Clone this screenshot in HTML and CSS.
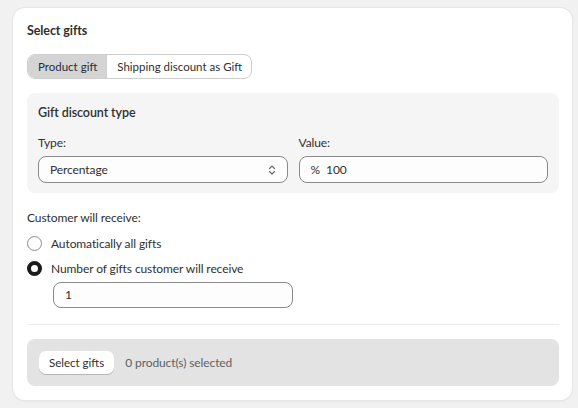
FILE: index.html
```html
<!DOCTYPE html>
<html lang="en">
<head>
    <meta charset="UTF-8">
    <meta name="viewport" content="width=device-width, initial-scale=1.0">
    <title>Select gifts</title>
    <link rel="stylesheet" href="styles.css">
</head>
<body>
    <div class="gift-card">
        <h2 class="gift-title">Select gifts</h2>

        <div class="segmented">
            <button class="segmented-item active">Product gift</button>
            <button class="segmented-item">Shipping discount as Gift</button>
        </div>

        <div class="discount-box">
            <h3 class="discount-title">Gift discount type</h3>
            <div class="discount-fields">
                <label class="field">
                    <span class="field-label">Type:</span>
                    <span class="select">
                        <span class="select-value">Percentage</span>
                        <svg class="select-icon" width="10" height="12" viewBox="0 0 10 12" fill="none" stroke="currentColor" stroke-width="1.2" stroke-linecap="round" stroke-linejoin="round">
                            <path d="M2.5 4.5 5 2l2.5 2.5"/>
                            <path d="M2.5 7.5 5 10l2.5-2.5"/>
                        </svg>
                    </span>
                </label>
                <label class="field">
                    <span class="field-label">Value:</span>
                    <span class="text-input">
                        <span class="input-prefix">%</span>
                        <span class="input-value">100</span>
                    </span>
                </label>
            </div>
        </div>

        <div class="receive">
            <div class="receive-label">Customer will receive:</div>
            <label class="radio-row">
                <span class="radio"></span>
                <span>Automatically all gifts</span>
            </label>
            <label class="radio-row">
                <span class="radio checked"></span>
                <span>Number of gifts customer will receive</span>
            </label>
            <div class="count-input">
                <span class="text-input">
                    <span class="input-value">1</span>
                </span>
            </div>
        </div>

        <hr class="divider">

        <div class="picker-bar">
            <button class="picker-button">Select gifts</button>
            <span class="picker-count">0 product(s) selected</span>
        </div>
    </div>
</body>
</html>
```

FILE: styles.css
```css
:root {
    --text-color: #303030;
    --muted-color: #616161;
    --page-color: #f1f1f1;
    --input-border: #8a8a8a;
}

body {
    margin: 0;
    padding: 8px 6px 9px 13px;
    background-color: var(--page-color);
    color: var(--text-color);
    font-family: Lato, "Liberation Sans", sans-serif;
    font-size: 12px;
    letter-spacing: -0.1px;
    line-height: 20px;
}

.gift-card {
    background: #ffffff;
    border-radius: 12px;
    padding: 13px 13px 14px 14px;
    box-shadow: 0 0 0 1px #e6e6e6, 0 1px 2px rgba(0, 0, 0, 0.1);
}

.gift-title {
    margin: 0 0 13px;
    font-size: 12.5px;
    font-weight: 700;
    line-height: 20px;
}

.segmented {
    display: inline-flex;
    border: 1px solid #cfcfcf;
    border-radius: 8px;
    overflow: hidden;
    background: #ffffff;
}

.segmented-item {
    height: 23px;
    padding: 0 9px 0 10px;
    border: none;
    background: transparent;
    color: var(--text-color);
    font-family: inherit;
    font-size: 11.5px;
    letter-spacing: 0;
    cursor: pointer;
}

.segmented-item + .segmented-item {
    border-left: 1px solid #cfcfcf;
}

.segmented-item.active {
    background: #d4d4d4;
    color: #1f2f3f;
}

.discount-box {
    margin-top: 14px;
    padding: 10px 11px 10px 11px;
    background: #f5f5f5;
    border-radius: 8px;
}

.discount-title {
    margin: 0 0 10px;
    font-size: 12.5px;
    font-weight: 600;
    line-height: 20px;
}

.discount-fields {
    display: grid;
    grid-template-columns: 1fr 1fr;
    gap: 11px;
}

.field {
    display: flex;
    flex-direction: column;
    gap: 3px;
}

.field-label {
    line-height: 20px;
}

.select,
.text-input {
    display: flex;
    align-items: center;
    height: 27px;
    padding: 0 11px;
    border: 1px solid var(--input-border);
    border-radius: 8px;
    background: #fdfdfd;
    box-sizing: border-box;
}

.select-value {
    flex: 1;
}

.select-icon {
    color: #6b6b6b;
    margin-right: -1px;
}

.input-prefix {
    margin-right: 6px;
}

.receive {
    margin-top: 15px;
}

.receive-label {
    margin-bottom: 3px;
}

.radio-row {
    display: flex;
    align-items: center;
    gap: 9px;
    height: 25px;
}

.radio {
    width: 15px;
    height: 15px;
    border: 1px solid #8a8a8a;
    border-radius: 50%;
    box-sizing: border-box;
    background: #ffffff;
}

.radio.checked {
    border: 4.5px solid #1a1a1a;
}

.count-input {
    padding: 1px 0 0 26px;
}

.count-input .text-input {
    width: 240px;
    height: 26px;
}

.divider {
    margin: 16px 0 14px;
    border: none;
    border-top: 1px solid #ebebeb;
}

.picker-bar {
    display: flex;
    align-items: center;
    gap: 11px;
    padding: 12px;
    background: #e3e3e3;
    border-radius: 8px;
}

.picker-button {
    height: 23px;
    padding: 0 10px;
    border: none;
    border-radius: 7px;
    background: #ffffff;
    color: var(--text-color);
    font-family: inherit;
    font-size: 11.5px;
    letter-spacing: 0;
    box-shadow: 0 1px 0 #b5b5b5, 0 0 0 1px #e3e3e3;
    cursor: pointer;
}

.picker-count {
    color: var(--muted-color);
}
```
